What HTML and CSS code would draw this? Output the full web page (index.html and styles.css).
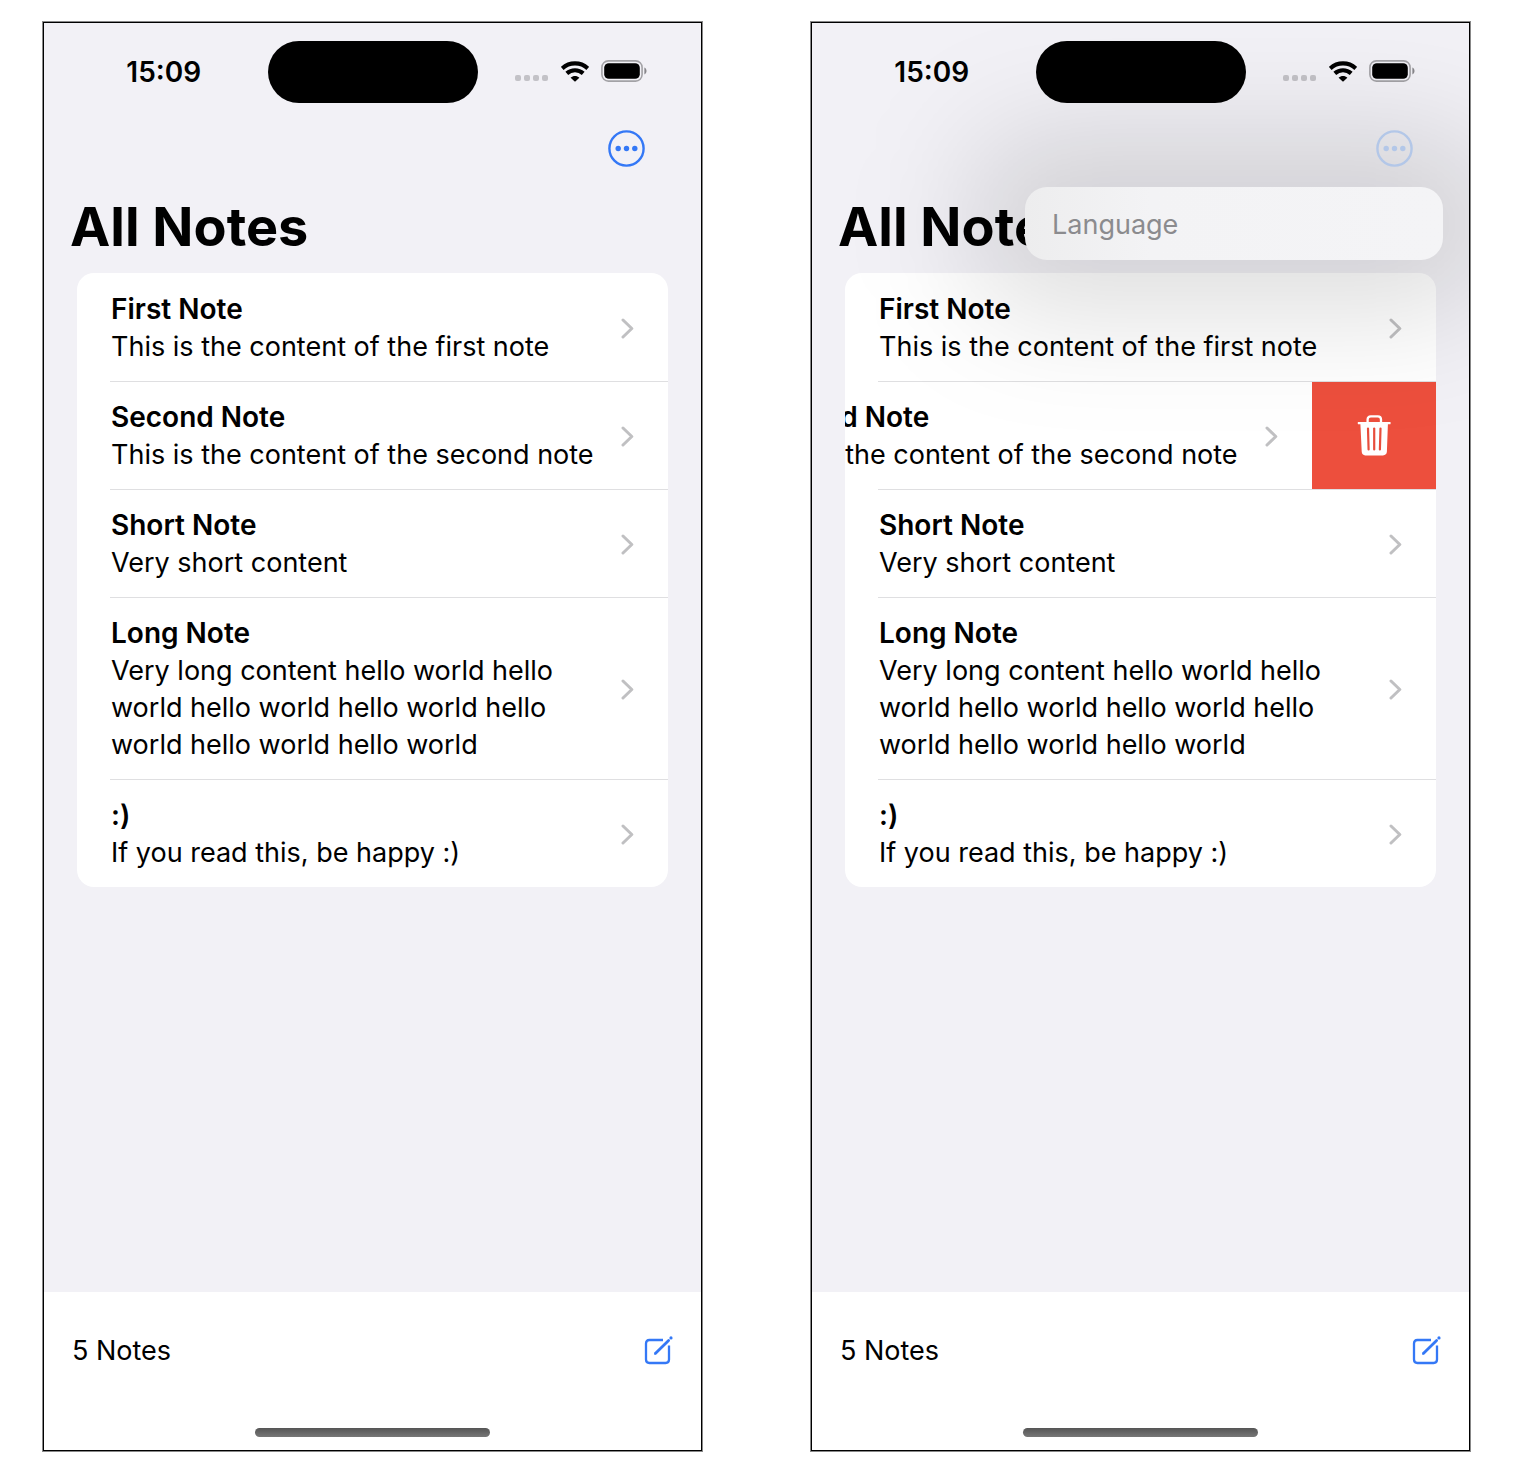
FILE: index.html
```html
<!DOCTYPE html>
<html lang="en">
<head>
<meta charset="utf-8">
<meta name="viewport" content="width=device-width, initial-scale=1">
<title>All Notes</title>
<link rel="stylesheet" href="styles.css">
</head>
<body>
<svg width="0" height="0" class="sprite" aria-hidden="true">
  <symbol id="signal" viewBox="0 0 34 7">
    <g fill="#c3c2c7"><rect x="0" y="0" width="6" height="6" rx="2"/><rect x="9" y="0" width="6" height="6" rx="2"/><rect x="18" y="0" width="6" height="6" rx="2"/><rect x="27" y="0" width="6" height="6" rx="2"/></g>
  </symbol>
  <symbol id="wifi" viewBox="0 0 28 21">
    <g fill="none" stroke="#000" stroke-width="4.2">
      <path d="M1.2 7.4C8.4.7 19.6.7 26.8 7.4"/>
      <path d="M5.8 12.4C10.5 8.200 17.5 8.200 22.200 12.400"/>
    </g>
    <path d="M14 20.8L9.600 16.700C12.200 14.300 15.800 14.300 18.400 16.700Z"/>
  </symbol>
  <symbol id="battery" viewBox="0 0 46 22">
    <rect x=".9" y=".9" width="40.2" height="20.2" rx="6.5" fill="none" stroke="#a3a2a6" stroke-width="1.6"/>
    <rect x="3.2" y="3.2" width="35.6" height="15.6" rx="4.6"/>
    <path d="M43.4 7.6C46.2 8.9 46.2 13.1 43.4 14.4Z" fill="#88878b"/>
  </symbol>
  <symbol id="more" viewBox="0 0 37 37">
    <circle cx="18.5" cy="18.5" r="17.1" fill="none" stroke="currentColor" stroke-width="2.4"/>
    <g fill="currentColor"><circle cx="10.2" cy="18.5" r="2.7"/><circle cx="18.5" cy="18.5" r="2.7"/><circle cx="26.8" cy="18.5" r="2.7"/></g>
  </symbol>
  <symbol id="chevron" viewBox="0 0 13 21">
    <path d="M2 2L10.8 10.5L2 19" fill="none" stroke="#c0c0c2" stroke-width="3" stroke-linecap="round" stroke-linejoin="round"/>
  </symbol>
  <symbol id="compose" viewBox="0 0 29 29">
    <g fill="none" stroke="currentColor" stroke-width="2.3" stroke-linecap="round">
      <path d="M19 4H5.4C3.2 4 2 5.2 2 7.4V23.6C2 25.8 3.2 27 5.4 27H21.6C23.8 27 25 25.8 25 23.6V9.6" stroke-linecap="butt"/>
      <path d="M11.6 17.2L24.6 4.4" stroke-width="2.8"/>
    </g>
    <path d="M10 18.7L10.8 15.9L12.8 17.9Z" fill="currentColor"/>
    <circle cx="27" cy="1.9" r="1.6" fill="currentColor"/>
  </symbol>
  <symbol id="trash" viewBox="0 0 34 41">
    <path d="M10.6 8V4.6Q10.6 1.4 13.8 1.4H20.8Q24 1.4 24 4.6V8" fill="none" stroke="#fff" stroke-width="2.3"/>
    <path d="M1 7H33.4Q34 8.1 33.4 9.2H30.9L29.900 36.600Q29.700 40.400 25.900 40.400H8.300Q4.900 40.400 4.700 36.600L3.400 9.200H1Q.3 8.1 1 7Z" fill="#fff"/>
    <g stroke="#e84d3c" stroke-width="2.2" stroke-linecap="round"><path d="M11 13.500L11.600 34.500"/><path d="M17.200 13.500V34.500"/><path d="M23.500 13.500L22.900 34.500"/></g>
  </symbol>
</svg>
<main class="screens">
  <section class="phone" aria-label="Notes list">
    <header class="status">
      <span class="time">15:09</span>
      <span class="island"></span>
      <span class="indicators">
        <svg class="signal"><use href="#signal"/></svg>
        <svg class="wifi"><use href="#wifi"/></svg>
        <svg class="battery"><use href="#battery"/></svg>
      </span>
    </header>
    <div class="toolbar">
      <button class="more" type="button" aria-label="More"><svg><use href="#more"/></svg></button>
    </div>
    <h1 class="title">All Notes</h1>
    <ul class="notes">
      <li class="row"><a class="note" href="#first"><span class="text"><strong>First Note</strong><span>This is the content of the first note</span></span><svg class="chevron"><use href="#chevron"/></svg></a></li>
      <li class="row"><a class="note" href="#second"><span class="text"><strong>Second Note</strong><span>This is the content of the second note</span></span><svg class="chevron"><use href="#chevron"/></svg></a></li>
      <li class="row"><a class="note" href="#short"><span class="text"><strong>Short Note</strong><span>Very short content</span></span><svg class="chevron"><use href="#chevron"/></svg></a></li>
      <li class="row"><a class="note" href="#long"><span class="text"><strong>Long Note</strong><span>Very long content hello world hello world hello world hello world hello world hello world hello world</span></span><svg class="chevron"><use href="#chevron"/></svg></a></li>
      <li class="row"><a class="note" href="#smile"><span class="text"><strong>:)</strong><span>If you read this, be happy :)</span></span><svg class="chevron"><use href="#chevron"/></svg></a></li>
    </ul>
    <footer class="bottom">
      <div class="summary"><span>5 Notes</span><button class="compose" type="button" aria-label="New note"><svg><use href="#compose"/></svg></button></div>
      <div class="home"></div>
    </footer>
  </section>

  <section class="phone" aria-label="Notes list with menu and delete action">
    <header class="status">
      <span class="time">15:09</span>
      <span class="island"></span>
      <span class="indicators">
        <svg class="signal"><use href="#signal"/></svg>
        <svg class="wifi"><use href="#wifi"/></svg>
        <svg class="battery"><use href="#battery"/></svg>
      </span>
    </header>
    <div class="toolbar">
      <button class="more active" type="button" aria-label="More" aria-expanded="true"><svg><use href="#more"/></svg></button>
      <div class="menu"><button class="menu-item" type="button">Language</button></div>
    </div>
    <h1 class="title">All Notes</h1>
    <ul class="notes">
      <li class="row"><a class="note" href="#first"><span class="text"><strong>First Note</strong><span>This is the content of the first note</span></span><svg class="chevron"><use href="#chevron"/></svg></a></li>
      <li class="row"><a class="note" href="#second"><span class="text"><strong>Second Note</strong><span>This is the content of the second note</span></span><svg class="chevron"><use href="#chevron"/></svg></a><button class="delete" type="button" aria-label="Delete"><svg><use href="#trash"/></svg></button></li>
      <li class="row"><a class="note" href="#short"><span class="text"><strong>Short Note</strong><span>Very short content</span></span><svg class="chevron"><use href="#chevron"/></svg></a></li>
      <li class="row"><a class="note" href="#long"><span class="text"><strong>Long Note</strong><span>Very long content hello world hello world hello world hello world hello world hello world hello world</span></span><svg class="chevron"><use href="#chevron"/></svg></a></li>
      <li class="row"><a class="note" href="#smile"><span class="text"><strong>:)</strong><span>If you read this, be happy :)</span></span><svg class="chevron"><use href="#chevron"/></svg></a></li>
    </ul>
    <footer class="bottom">
      <div class="summary"><span>5 Notes</span><button class="compose" type="button" aria-label="New note"><svg><use href="#compose"/></svg></button></div>
      <div class="home"></div>
    </footer>
  </section>
</main>
</body>
</html>
```
FILE: styles.css
```css
* {
  box-sizing: border-box;
}

body {
  margin: 0;
  background: #fff;
  color: #000;
  font: 400 27px/37px Inter, "Liberation Sans", sans-serif;
}

button {
  margin: 0;
  padding: 0;
  border: 0;
  background: none;
  color: inherit;
  font: inherit;
}

svg {
  display: block;
  flex: none;
}

.sprite {
  position: absolute;
}

.screens {
  display: grid;
  grid-template-columns: 1fr 1fr;
  gap: 109px;
  min-height: 100vh;
  padding: 22px 66px 29px 43px;
}

.phone {
  display: flex;
  flex-direction: column;
  min-width: 0;
  overflow: hidden;
  border: 1px solid #000;
  box-shadow: 0 0 0 1px #888;
  background: #f2f1f6;
}

/* Status bar */
.status {
  display: grid;
  grid-template-columns: 1fr auto 1fr;
  align-items: center;
  padding: 18px 16px 0;
}

.time {
  font-size: 28px;
  font-weight: 600;
  text-align: center;
}

.island {
  width: 210px;
  height: 62px;
  border-radius: 31px;
  background: #000;
}

.indicators {
  display: flex;
  align-items: center;
  justify-content: center;
  gap: 12px;
  padding-bottom: 2px;
}

.signal {
  align-self: flex-end;
  width: 34px;
  height: 7px;
}

.wifi {
  width: 28px;
  height: 21px;
}

.battery {
  width: 46px;
  height: 22px;
}

/* Toolbar and menu */
.toolbar {
  position: relative;
  display: flex;
  justify-content: flex-end;
  padding: 27px 56px 0;
}

.more,
.compose {
  color: #3478f6;
}

.more svg {
  width: 37px;
  height: 37px;
}

.more.active {
  color: #b3c7e8;
  position: relative;
  z-index: 3;
}

.menu {
  position: absolute;
  z-index: 2;
  top: calc(100% + 20px);
  right: 26px;
  width: 418px;
}

/* Wide, soft shadow around the menu */
.menu::before {
  content: "";
  position: absolute;
  z-index: -1;
  inset: -52px;
  border-radius: 60px;
  background: rgba(0, 0, 0, 0.135);
  filter: blur(60px);
  pointer-events: none;
}

.menu-item {
  display: block;
  width: 100%;
  padding: 19px 27px 17px;
  border-radius: 22px;
  background: linear-gradient(90deg, #ededee, #f3f3f5 30%, #f4f4f6);
  color: #8b8b8e;
  text-align: left;
}

.title {
  margin: 26px 26px 12px;
  font-size: 54px;
  font-weight: 700;
  line-height: 68px;
}

/* Notes */
.notes {
  margin: 0 33px;
  padding: 0;
  overflow: hidden;
  border-radius: 17px;
  background: #fff;
  list-style: none;
}

.row {
  position: relative;
  display: flex;
  justify-content: flex-end;
}

.row + .row::before {
  content: "";
  position: absolute;
  top: 0;
  left: 33px;
  right: 0;
  height: 1px;
  background: #dfdfe1;
}

.note {
  display: flex;
  flex: none;
  align-items: center;
  gap: 20px;
  width: 100%;
  padding: 18px 34px 16px;
  color: inherit;
  text-decoration: none;
}

.text {
  display: flex;
  flex: 1;
  flex-direction: column;
}

.text strong {
  font-size: 28px;
  font-weight: 600;
}

.chevron {
  width: 13px;
  height: 21px;
}

.delete {
  display: flex;
  flex: none;
  align-items: center;
  justify-content: center;
  width: 124px;
  background: #ed4f3d;
}

.delete svg {
  width: 34px;
  height: 41px;
}

/* Footer */
.bottom {
  margin-top: auto;
  padding: 40px 28px 13px;
  background: #fff;
}

.summary {
  display: flex;
  align-items: center;
  justify-content: space-between;
}

.compose svg {
  width: 29px;
  height: 29px;
}

.home {
  width: 235px;
  height: 9px;
  margin: 59px auto 0;
  border-radius: 5px;
  background: linear-gradient(#555, #777);
}
```
